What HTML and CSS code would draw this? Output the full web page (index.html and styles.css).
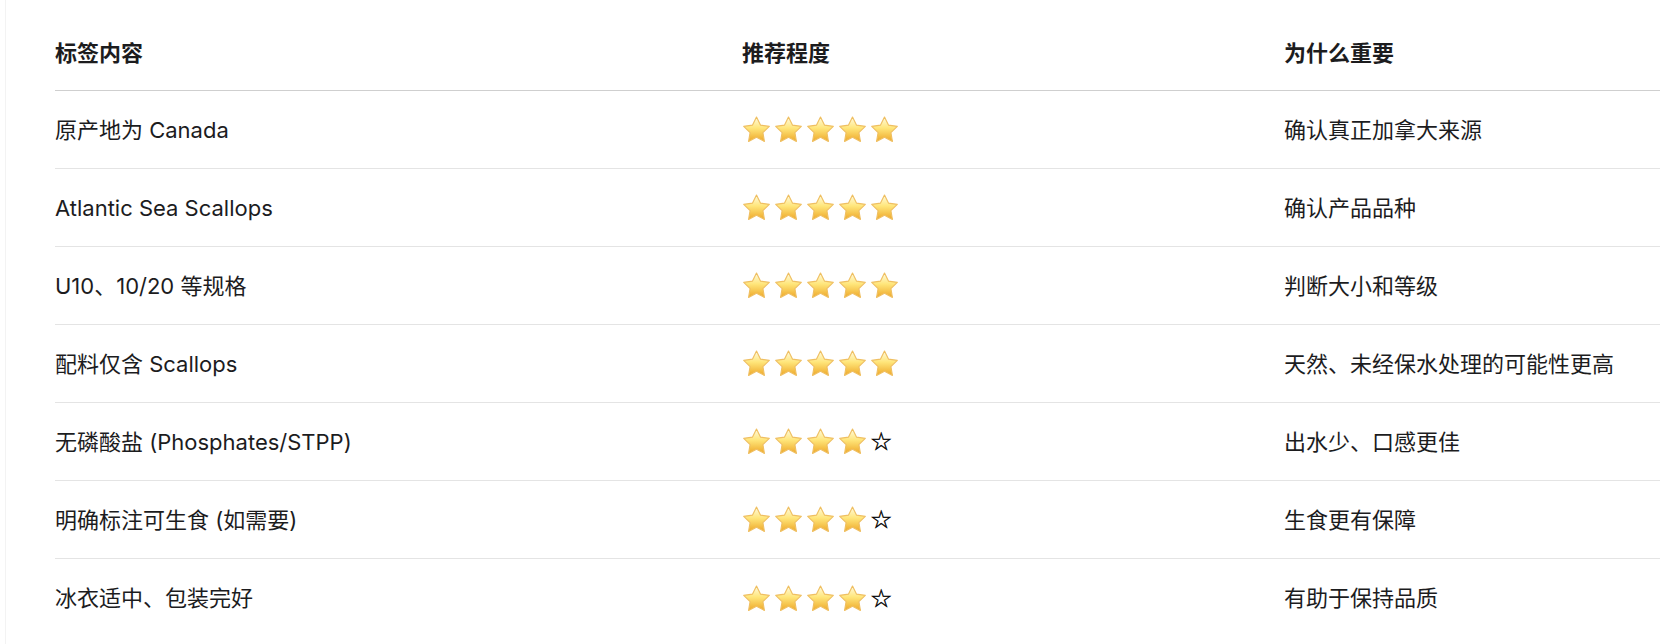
FILE: index.html
```html
<!DOCTYPE html>
<html lang="zh-CN">
<head>
<meta charset="utf-8">
<title>标签内容</title>
<link rel="stylesheet" href="styles.css">
</head>
<body>
<svg class="defs" width="0" height="0" aria-hidden="true">
  <defs>
    <linearGradient id="starFill" x1="0" y1="0" x2="0" y2="1">
      <stop offset="0" stop-color="#fffbe2"/>
      <stop offset="0.45" stop-color="#ffe67a"/>
      <stop offset="1" stop-color="#eea829"/>
    </linearGradient>
    <symbol id="star" viewBox="0 0 28 26">
      <path d="M14 1 L17.82 8.74 L26.36 9.98 L20.18 16.01 L21.64 24.52 L14 20.5 L6.36 24.52 L7.82 16.01 L1.64 9.98 L10.18 8.74 Z" fill="url(#starFill)" stroke="#efbf62" stroke-width="1.1" stroke-linejoin="round"/>
    </symbol>
  </defs>
</svg>
<div class="page">
  <div class="table">
    <div class="row head">
      <div class="cell">标签内容</div>
      <div class="cell">推荐程度</div>
      <div class="cell">为什么重要</div>
    </div>
    <div class="row">
      <div class="cell">原产地为 Canada</div>
      <div class="cell stars"><svg class="star"><use href="#star"/></svg><svg class="star"><use href="#star"/></svg><svg class="star"><use href="#star"/></svg><svg class="star"><use href="#star"/></svg><svg class="star"><use href="#star"/></svg></div>
      <div class="cell">确认真正加拿大来源</div>
    </div>
    <div class="row">
      <div class="cell">Atlantic Sea Scallops</div>
      <div class="cell stars"><svg class="star"><use href="#star"/></svg><svg class="star"><use href="#star"/></svg><svg class="star"><use href="#star"/></svg><svg class="star"><use href="#star"/></svg><svg class="star"><use href="#star"/></svg></div>
      <div class="cell">确认产品品种</div>
    </div>
    <div class="row">
      <div class="cell">U10、10/20 等规格</div>
      <div class="cell stars"><svg class="star"><use href="#star"/></svg><svg class="star"><use href="#star"/></svg><svg class="star"><use href="#star"/></svg><svg class="star"><use href="#star"/></svg><svg class="star"><use href="#star"/></svg></div>
      <div class="cell">判断大小和等级</div>
    </div>
    <div class="row">
      <div class="cell">配料仅含 Scallops</div>
      <div class="cell stars"><svg class="star"><use href="#star"/></svg><svg class="star"><use href="#star"/></svg><svg class="star"><use href="#star"/></svg><svg class="star"><use href="#star"/></svg><svg class="star"><use href="#star"/></svg></div>
      <div class="cell">天然、未经保水处理的可能性更高</div>
    </div>
    <div class="row">
      <div class="cell">无磷酸盐 (Phosphates/STPP)</div>
      <div class="cell stars"><svg class="star"><use href="#star"/></svg><svg class="star"><use href="#star"/></svg><svg class="star"><use href="#star"/></svg><svg class="star"><use href="#star"/></svg><span class="empty">☆</span></div>
      <div class="cell">出水少、口感更佳</div>
    </div>
    <div class="row">
      <div class="cell">明确标注可生食 (如需要)</div>
      <div class="cell stars"><svg class="star"><use href="#star"/></svg><svg class="star"><use href="#star"/></svg><svg class="star"><use href="#star"/></svg><svg class="star"><use href="#star"/></svg><span class="empty">☆</span></div>
      <div class="cell">生食更有保障</div>
    </div>
    <div class="row last">
      <div class="cell">冰衣适中、包装完好</div>
      <div class="cell stars"><svg class="star"><use href="#star"/></svg><svg class="star"><use href="#star"/></svg><svg class="star"><use href="#star"/></svg><svg class="star"><use href="#star"/></svg><span class="empty">☆</span></div>
      <div class="cell">有助于保持品质</div>
    </div>
  </div>
</div>
</body>
</html>
```

FILE: styles.css
```css
html, body {
  margin: 0;
  padding: 0;
  background: #ffffff;
}

body {
  font-family: Inter, "Noto Sans CJK SC", sans-serif;
  font-size: 22px;
  color: #1c1c1e;
  overflow: hidden;
}

.defs {
  position: absolute;
  width: 0;
  height: 0;
}

.page {
  margin-left: 5px;
  border-left: 1px solid #f3f3f3;
  padding-left: 49px;
  height: 644px;
}

.table {
  display: flex;
  flex-direction: column;
}

.row {
  display: grid;
  grid-template-columns: 687px 542px 1fr;
  align-items: center;
  box-sizing: border-box;
  height: 78px;
  border-bottom: 1px solid #e4e4e4;
}

.row.head {
  height: 91px;
  padding-top: 16px;
  border-bottom: 1px solid #cfcfcf;
  font-weight: 700;
}

.row.last {
  border-bottom: none;
}

.cell {
  white-space: nowrap;
  line-height: 30px;
}

.stars {
  display: flex;
  align-items: center;
  gap: 3px;
}

.star {
  width: 29px;
  height: 27px;
  display: block;
}

.empty {
  font-family: "DejaVu Sans", sans-serif;
  font-size: 25px;
  line-height: 27px;
  color: #000;
  -webkit-text-stroke: 0.4px #000;
}
```
